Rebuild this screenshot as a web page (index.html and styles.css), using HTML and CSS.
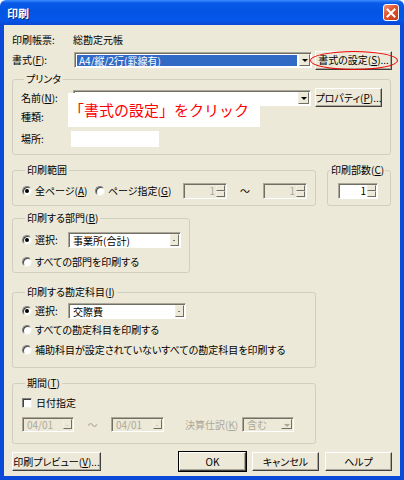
FILE: index.html
```html
<!DOCTYPE html>
<html lang="ja">
<head>
    <meta charset="UTF-8">
    <title>印刷</title>
    <link rel="stylesheet" href="styles.css">
</head>
<body>
    <div class="window">
        <div class="titlebar">
            <span class="title">印刷</span>
            <span class="close">
                <svg width="10" height="10" viewBox="0 0 10 10"><path d="M1.5 1.5 L8.5 8.5 M8.5 1.5 L1.5 8.5" stroke="#fff" stroke-width="2" stroke-linecap="square"/></svg>
            </span>
        </div>

        <div class="frame">
            <div class="row r1">
                <span class="lbl top-lbl">印刷帳票:</span>
                <span>総勘定元帳</span>
            </div>
            <div class="row r2">
                <span class="lbl top-lbl">書式(<u>F</u>):</span>
                <div class="combo fmt-combo">
                    <span class="field picked">A4/縦/2行(罫線有)</span>
                    <span class="arrow"></span>
                </div>
                <button class="btn fmt-btn">書式の設定(<u>S</u>)...</button>
            </div>

            <fieldset class="group printer">
                <legend>プリンタ</legend>
                <div class="row p-name">
                    <span class="lbl name-lbl">名前(<u>N</u>):</span>
                    <div class="combo printer-combo">
                        <span class="field"></span>
                        <span class="arrow"></span>
                    </div>
                    <button class="btn prop-btn">プロパティ(<u>P</u>)...</button>
                </div>
                <div class="row p-kind">
                    <span class="lbl">種類:</span>
                </div>
                <div class="row p-place">
                    <span class="lbl place-lbl">場所:</span>
                    <span class="mask"></span>
                </div>
            </fieldset>

            <div class="range-row">
                <fieldset class="group range">
                    <legend>印刷範囲</legend>
                    <div class="row range-line">
                        <span class="opt opt-all"><span class="radio on"></span>全ページ(<u>A</u>)</span>
                        <span class="opt opt-page"><span class="radio"></span>ページ指定(<u>G</u>)</span>
                        <div class="spin off"><span class="spin-val">1</span><span class="spin-btns"><i></i><i></i></span></div>
                        <span class="tilde">〜</span>
                        <div class="spin off"><span class="spin-val">1</span><span class="spin-btns"><i></i><i></i></span></div>
                    </div>
                </fieldset>
                <fieldset class="group copies">
                    <legend>印刷部数(<u>C</u>)</legend>
                    <div class="row range-line">
                        <div class="spin copies-spin"><span class="spin-val">1</span><span class="spin-btns"><i></i><i></i></span></div>
                    </div>
                </fieldset>
            </div>

            <fieldset class="group dept">
                <legend>印刷する部門(<u>B</u>)</legend>
                <div class="row pick-line dept-1">
                    <span class="opt opt-sel"><span class="radio on"></span>選択:</span>
                    <div class="combo pick-combo">
                        <span class="field">事業所(合計)</span>
                        <span class="arrow small"></span>
                    </div>
                </div>
                <div class="row text-line dept-2">
                    <span class="opt"><span class="radio"></span>すべての部門を印刷する</span>
                </div>
            </fieldset>

            <fieldset class="group account">
                <legend>印刷する勘定科目(<u>I</u>)</legend>
                <div class="row pick-line acc-1">
                    <span class="opt opt-sel"><span class="radio on"></span>選択:</span>
                    <div class="combo pick-combo">
                        <span class="field">交際費</span>
                        <span class="arrow small"></span>
                    </div>
                </div>
                <div class="row text-line acc-2">
                    <span class="opt"><span class="radio"></span>すべての勘定科目を印刷する</span>
                </div>
                <div class="row text-line acc-3">
                    <span class="opt"><span class="radio"></span>補助科目が設定されていないすべての勘定科目を印刷する</span>
                </div>
            </fieldset>

            <fieldset class="group period">
                <legend>期間(<u>T</u>)</legend>
                <div class="row text-line per-1">
                    <span class="check"></span>
                    <span class="check-lbl">日付指定</span>
                </div>
                <div class="row per-2">
                    <div class="combo off date-combo"><span class="field">04/01</span><span class="arrow small"></span></div>
                    <span class="tilde off-text date-tilde">〜</span>
                    <div class="combo off date-combo d2"><span class="field">04/01</span><span class="arrow small"></span></div>
                    <span class="off-text closing-lbl">決算仕訳(<u>K</u>)</span>
                    <div class="combo off date-combo"><span class="field">含む</span><span class="arrow"></span></div>
                </div>
            </fieldset>

            <div class="row buttons">
                <button class="btn preview-btn">印刷プレビュー(<u>V</u>)...</button>
                <span class="spacer"></span>
                <button class="btn dlg-btn default">OK</button>
                <button class="btn dlg-btn">キャンセル</button>
                <button class="btn dlg-btn">ヘルプ</button>
            </div>
        </div>

        <div class="note">「書式の設定」をクリック</div>
        <div class="ring"></div>
    </div>
</body>
</html>
```

FILE: styles.css
```css
* { box-sizing: border-box; }
body { margin: 0; padding: 0; background: #fff; font-family: "MS UI Gothic", "Noto Sans CJK JP", sans-serif; font-size: 10px; line-height: 14px; color: #000; font-feature-settings: "palt"; }
u { text-decoration: underline; text-underline-offset: 1px; }

.window { position: relative; width: 404px; height: 480px; overflow: hidden; }

/* title bar */
.titlebar { height: 25px; display: flex; align-items: center; padding: 0 5px 0 7px; background: linear-gradient(#3d8dff 0%, #0a5ae8 12%, #0254e3 45%, #0557ea 80%, #0a47d2 100%); border-radius: 6px 6px 0 0; }
.title { color: #fff; font-weight: bold; font-size: 11px; text-shadow: 1px 1px 0 #0a2a80; }
.close { margin-left: auto; width: 16px; height: 17px; display: flex; align-items: center; justify-content: center; border: 1px solid #fff; border-radius: 3px; background: linear-gradient(135deg, #f09478 0%, #e0522c 45%, #c33a16 100%); }

/* window body */
.frame { height: 455px; background: #ece9d8; border: 4px solid #0b4ad8; border-top: 0; padding: 0 8px 0 8px; display: flex; flex-direction: column; }
.row { display: flex; align-items: center; }
.lbl { flex: none; }
.top-lbl { width: 62px; }
.r1 { height: 14px; margin-top: 8px; }
.r1 .top-lbl { width: 61px; }
.r2 { height: 20px; margin-top: 3px; }

/* combo boxes */
.combo { height: 16px; display: flex; align-items: stretch; background: #fff; border: 1px solid; border-color: #aca899 #fff #fff #aca899; box-shadow: inset 1px 1px 0 #716f64; padding: 1px 1px 0 2px; }
.combo .field { flex: 1; padding-left: 2px; line-height: 13px; white-space: nowrap; }
.combo .field.picked { background: #316ac5; color: #fff; margin: 1px 2px 1px 0; line-height: 11px; }
.arrow { flex: none; width: 11px; background: #ece9d8; border: 1px solid; border-color: #f1efe2 #716f64 #716f64 #f1efe2; position: relative; margin-bottom: 1px; }
.arrow::after { content: ""; position: absolute; left: 2px; top: 4px; border: 3px solid transparent; border-top: 3px solid #000; border-bottom: 0; }
.arrow.small { width: 9px; }
.arrow.small::after { left: 2px; top: 5px; border-width: 1px; border-top-width: 1px; }
.fmt-combo { width: 238px; }
.fmt-btn { margin-left: 3px; width: 77px; height: 20px; }

/* buttons */
.btn { font: inherit; font-feature-settings: "palt"; color: #000; background: #ece9d8; border: 1px solid; border-color: #fff #404040 #404040 #fff; box-shadow: inset -1px -1px 0 #aca899; padding: 0; height: 19px; display: flex; align-items: center; justify-content: center; white-space: nowrap; }
.btn.default { box-shadow: inset -1px -1px 0 #aca899, 0 0 0 1px #000; }

/* group boxes */
.group { margin: 0; padding: 0 8px 0 9px; border: 1px solid #d0d0bf; border-radius: 3px; min-width: 0; }
.group legend { padding: 0 2px; margin-left: 3px; line-height: 14px; height: 14px; white-space: nowrap; }

.printer { width: 379px; margin-top: 2px; padding-left: 8px; padding-bottom: 7px; }
.p-name { height: 19px; margin-top: 2px; }
.name-lbl { width: 52px; }
.printer-combo { width: 238px; }
.prop-btn { margin-left: 4px; width: 67px; }
.p-kind { height: 14px; margin-top: 3px; }
.p-place { height: 16px; margin-top: 7px; }
.place-lbl { width: 50px; }
.mask { width: 88px; height: 16px; background: #fff; }

.range-row { display: flex; gap: 11px; margin-top: 8px; }
.range { width: 304px; padding-bottom: 6px; }
.copies { width: 64px; padding: 0 0 6px 10px; }
.copies legend { margin-left: -8px; padding: 0 1px; }
.range-line { height: 16px; margin-top: 6px; }

/* radios and checkbox */
.opt { display: flex; align-items: center; flex: none; white-space: nowrap; }
.radio { flex: none; width: 10px; height: 10px; margin-right: 3px; border-radius: 50%; background: #fff; border: 1px solid; border-color: #808080 #f1efe2 #f1efe2 #808080; box-shadow: inset 1px 1px 0 #404040; position: relative; }
.radio.on::after { content: ""; position: absolute; left: 2px; top: 2px; width: 4px; height: 4px; border-radius: 50%; background: #000; }
.opt-all { width: 73px; }
.opt-page { width: 88px; }
.check { flex: none; width: 10px; height: 10px; background: #fff; border: 1px solid; border-color: #808080 #f1efe2 #f1efe2 #808080; box-shadow: inset 1px 1px 0 #404040; }
.check-lbl { margin-left: 4px; }

/* spin boxes */
.spin { width: 44px; height: 16px; display: flex; background: #fff; border: 1px solid; border-color: #aca899 #fff #fff #aca899; box-shadow: inset 1px 1px 0 #716f64; padding: 1px 1px 1px 2px; }
.spin-val { flex: 1; text-align: right; line-height: 12px; padding-right: 1px; }
.spin-btns { width: 9px; display: flex; flex-direction: column; }
.spin-btns i { flex: 1; background: #ece9d8; border: 1px solid; border-color: #f1efe2 #716f64 #716f64 #f1efe2; }
.spin.off { background: #ece9d8; }
.spin.off .spin-val { color: #aca899; }
.copies-spin { width: 40px; }
.tilde { width: 36px; text-align: center; flex: none; }

.dept { width: 178px; margin-top: 5px; padding-bottom: 3px; }
.pick-line { height: 16px; }
.text-line { height: 14px; }
.dept-1 { margin-top: 7px; }
.dept-2 { margin-top: 7px; }
.opt-sel { width: 46px; }
.pick-combo { width: 118px; }

.account { width: 304px; margin-top: 12px; padding-bottom: 10px; }
.acc-1 { margin-top: 4px; }
.acc-2 { margin-top: 4px; }
.acc-3 { margin-top: 6px; }

.period { width: 304px; margin-top: 8px; padding-bottom: 11px; }
.per-1 { margin-top: 6px; }
.per-2 { height: 15px; margin-top: 7px; }
.combo.off { background: #ece9d8; height: 15px; padding-bottom: 1px; }
.combo.off .field { color: #aca899; line-height: 12px; }
.combo.off .arrow::after { border-top-color: #aca899; }
.date-combo { width: 52px; flex: none; }
.date-combo.d2 { width: 53px; }
.date-tilde { width: 37px; }
.off-text { color: #aca899; }
.closing-lbl { margin-left: 21px; width: 57px; flex: none; white-space: nowrap; }

.buttons { margin-top: 8px; gap: 6px; }
.preview-btn { width: 89px; }
.spacer { flex: 1; }
.dlg-btn { width: 67px; }

/* annotation over the dialog */
.note { position: absolute; left: 68px; top: 93px; width: 192px; height: 34px; background: #fff; color: #f00; font-size: 15px; line-height: 34px; padding-left: 1px; font-feature-settings: normal; white-space: nowrap; }
.ring { position: absolute; left: 310px; top: 51px; width: 88px; height: 19px; border: 1px solid #e00; border-radius: 50%; }
```
